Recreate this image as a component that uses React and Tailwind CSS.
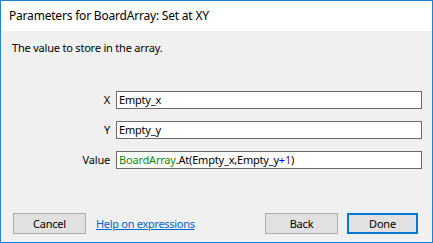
export default function App() {
  const font = { fontFamily: '"Noto Sans", "Open Sans", sans-serif' };
  return (
    <div className="w-[433px] h-[243px] border border-[#1883d7] flex flex-col text-[11px] tracking-[-0.2px] text-black" style={font}>
      <div className="h-[30px] bg-white flex items-center pl-[8px] text-[12px] tracking-[-0.2px] leading-[16px] shrink-0">
        Parameters for BoardArray: Set at XY
      </div>
      <div className="flex-1 bg-[#f0f0f0] flex flex-col">
        <div className="pl-[11px] pt-[9px] leading-[16px]">The value to store in the array.</div>
        <div className="mt-[35px] flex flex-col gap-[12px]">
          <Row label="X">Empty_x</Row>
          <Row label="Y">Empty_y</Row>
          <Row label="Value">
            <span className="text-[#0f8a0f]">BoardArray</span>
            <span>.At(Empty_x,Empty_y</span>
            <span className="text-[#0000ff]">+</span>
            <span className="text-[#4b16c8]">1</span>
            <span>)</span>
          </Row>
        </div>
        <div className="mt-auto pb-[8px] pl-[12px] pr-[14px] flex items-center">
          <button className="w-[73px] h-[21px] bg-[#e1e1e1] border border-[#adadad] leading-[16px]">Cancel</button>
          <a className="ml-[10px] text-[#0066cc] underline leading-[16px] tracking-[-0.3px]">Help on expressions</a>
          <button className="ml-auto w-[73px] h-[21px] bg-[#e1e1e1] border border-[#adadad] leading-[16px]">Back</button>
          <button className="ml-[9px] w-[71px] h-[21px] bg-[#e1e1e1] border-2 border-[#0078d7] leading-[16px]">Done</button>
        </div>
      </div>
    </div>
  );
}

function Row({ label, children }) {
  return (
    <div className="flex items-center h-[18px]">
      <div className="w-[109px] text-right leading-[16px]">{label}</div>
      <div className="ml-[6px] w-[306px] h-[18px] bg-white border border-[#6b6b6b] flex items-center pl-[2px] leading-[16px] whitespace-nowrap overflow-hidden">
        {children}
      </div>
    </div>
  );
}
